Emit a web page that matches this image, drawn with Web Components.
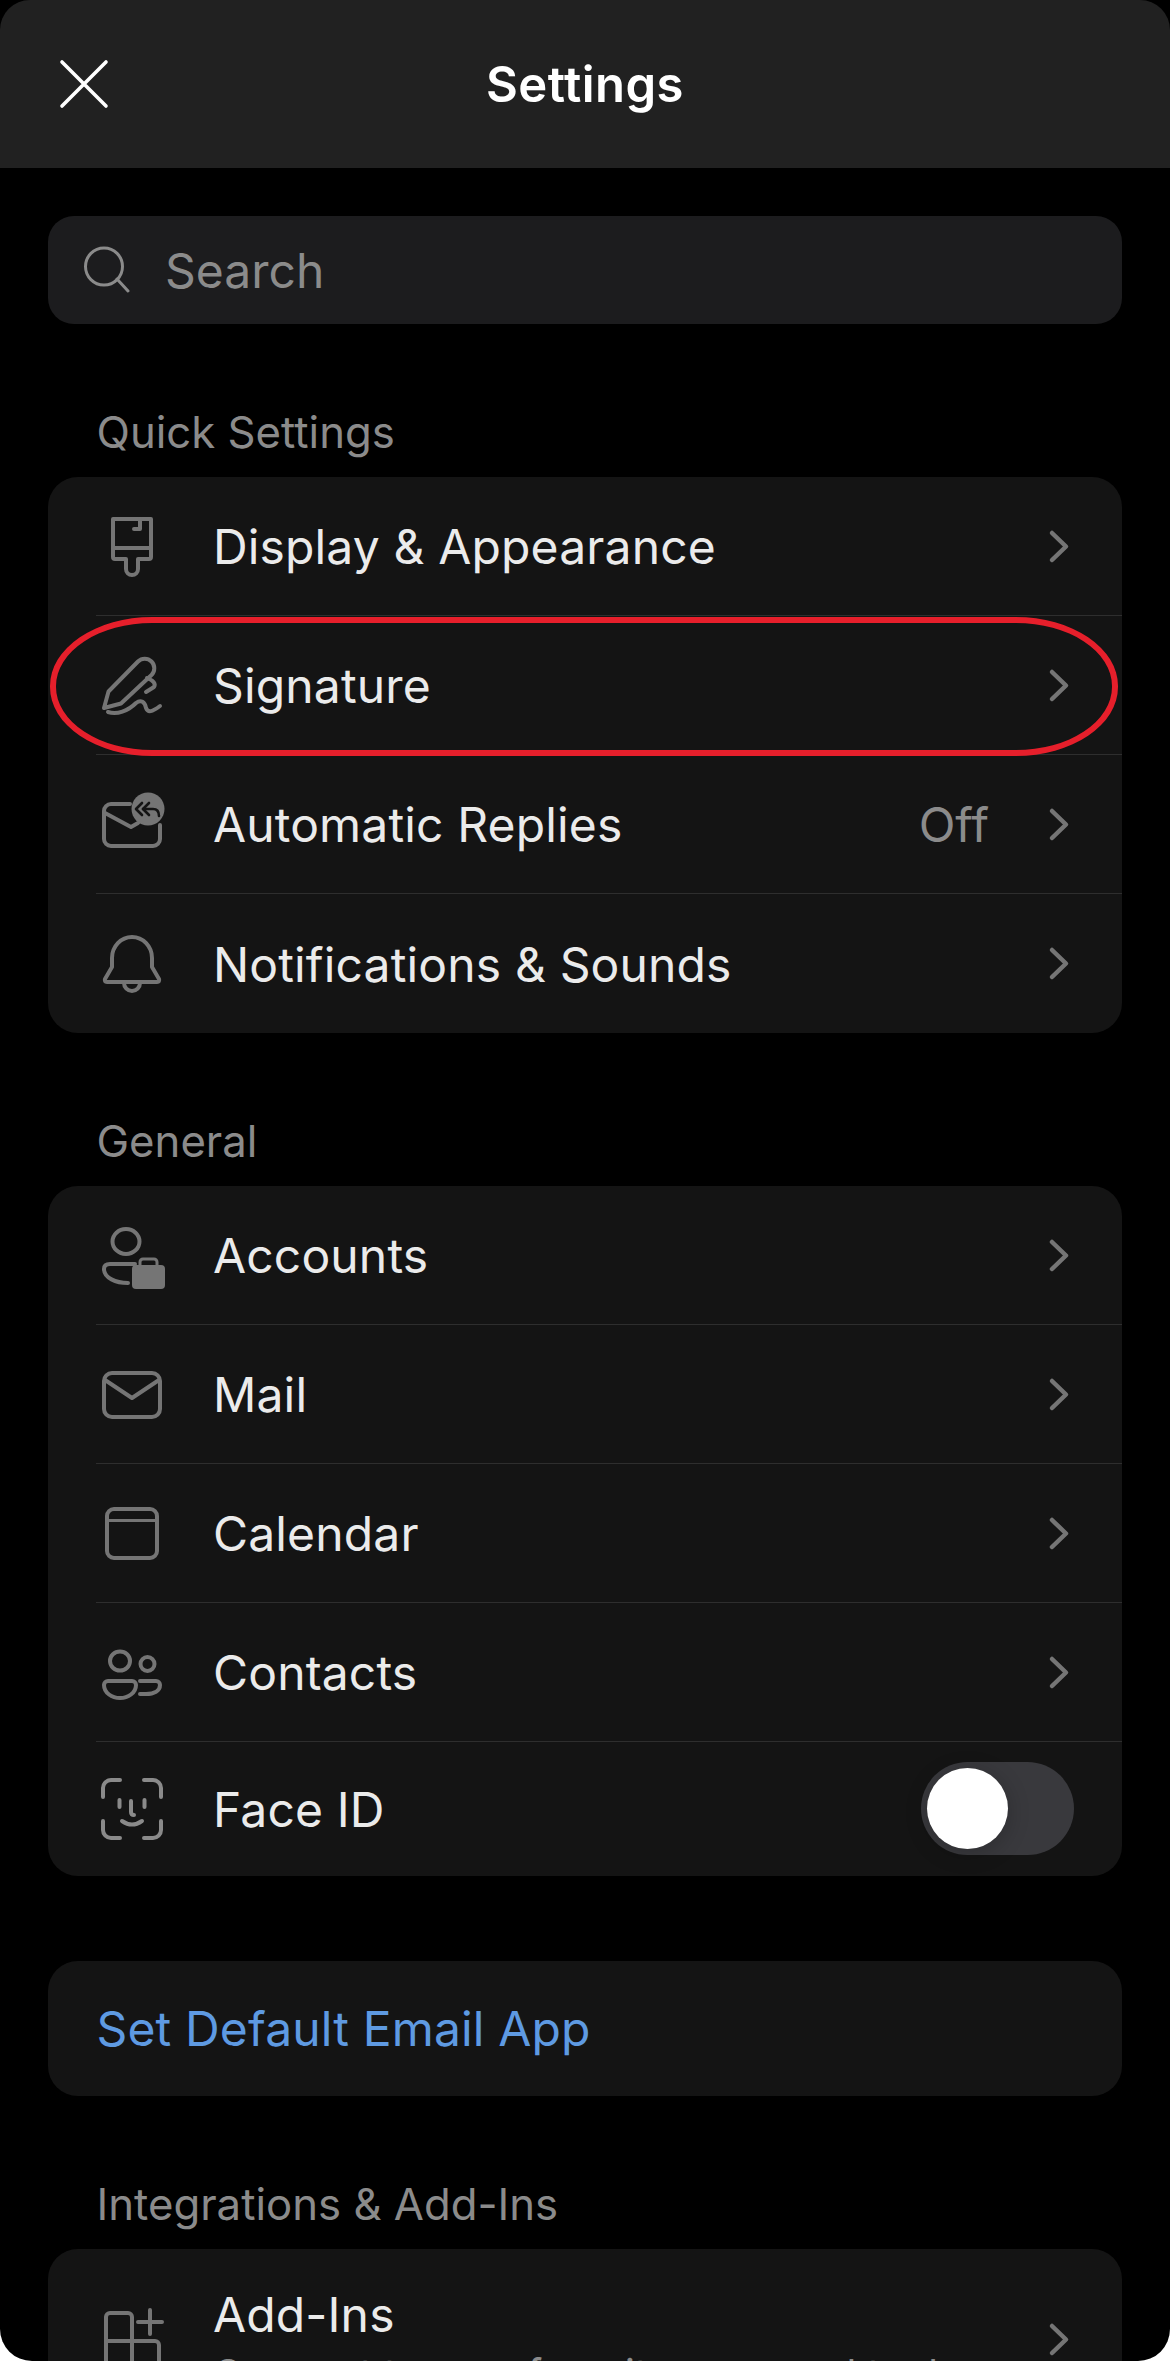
<!DOCTYPE html>
<html lang="en">
<head>
<meta charset="utf-8">
<title>Settings</title>
<style>
  html, body { margin: 0; padding: 0; background: #fff; }
  body { width: 1170px; height: 2361px; overflow: hidden; font-family: Inter, "Liberation Sans", sans-serif; }
</style>
</head>
<body>
<settings-screen>
  <settings-header slot="header" title="Settings"></settings-header>
  <search-box placeholder="Search"></search-box>

  <settings-section label="Quick Settings">
    <settings-row icon="brush" label="Display &amp; Appearance"></settings-row>
    <settings-row icon="signature" label="Signature"><highlight-ring slot="overlay"></highlight-ring></settings-row>
    <settings-row icon="reply" label="Automatic Replies" value="Off"></settings-row>
    <settings-row icon="bell" label="Notifications &amp; Sounds"></settings-row>
  </settings-section>

  <settings-section label="General">
    <settings-row icon="accounts" label="Accounts"></settings-row>
    <settings-row icon="mail" label="Mail"></settings-row>
    <settings-row icon="calendar" label="Calendar"></settings-row>
    <settings-row icon="contacts" label="Contacts"></settings-row>
    <settings-row icon="faceid" label="Face ID" toggle height="134"></settings-row>
  </settings-section>

  <link-card label="Set Default Email App"></link-card>

  <settings-section label="Integrations &amp; Add-Ins">
    <settings-row icon="addins" label="Add-Ins" sub="Connect to your favorite apps and tools" height="180"></settings-row>
  </settings-section>
</settings-screen>

<script>
// Icon drawings, all on a 66x66 box with the row's centre line at y=33
const ICONS = {
  brush: `<path d="M14 6H52V44a2 2 0 0 1-2 2H39V56a6 6 0 0 1-12 0V46H16a2 2 0 0 1-2-2Z"/><path d="M14 35H52"/><path d="M35 16H41V6"/>`,
  signature: `<path d="M5 56L9.5 39.5L39 9.5A9.5 9.5 0 0 1 52.5 23L22 51.5Z" stroke-linejoin="round"/><path d="M48 26Q58 30 55 35L47 40"/><path d="M9 60C18 63 29 59 37 51C42 47 46 50 47 56C49 61 53 60 61 54"/>`,
  reply: `<path d="M31 13H12a7 7 0 0 0-7 7V48a7 7 0 0 0 7 7H54a7 7 0 0 0 7-7V34"/><path d="M6 22L32 36L39 32"/>
    <circle cx="49" cy="18" r="16.5" fill="#757575" stroke="none"/>
    <g stroke="#141414" stroke-width="2.6"><path d="M43 12L37 18L43 24"/><path d="M50 12L44 18L50 24"/><path d="M44 18H54Q60 18 60 25"/></g>`,
  bell: `<path d="M13 27A20 21 0 0 1 53 27V36L60 48Q61 51 58 51H8Q5 51 6 48L13 36Z"/><path d="M25 52a8 8 0 0 0 16 0"/>`,
  accounts: `<ellipse cx="27" cy="19.5" rx="13.5" ry="12.5"/><path d="M36 42H11Q5 42 5 47C5 56 17 61 29 61"/>
    <rect x="33" y="43" width="33" height="24" rx="4" fill="#757575" stroke="none"/><path d="M41 44V40a3 3 0 0 1 3-3H55a3 3 0 0 1 3 3V44" stroke-width="3"/>`,
  mail: `<rect x="5" y="12" width="56" height="44" rx="8"/><path d="M6 19L33 37L60 19"/>`,
  calendar: `<rect x="8" y="9" width="50" height="49" rx="7"/><path d="M8 20.5H58" stroke-width="3"/>`,
  contacts: `<ellipse cx="21" cy="22" rx="10" ry="9.5"/><path d="M9 42H33a4 4 0 0 1 4 4C37 54 29 59 21 59S5 54 5 46a4 4 0 0 1 4-4Z"/>
    <circle cx="48.5" cy="25" r="7"/><path d="M41 42H57a4 4 0 0 1 4 4C61 52 55 55 47 55H41"/>`,
  faceid: `<g stroke="#8a8a8a"><path d="M4 21V12a8 8 0 0 1 8-8H21"/><path d="M45 4H54a8 8 0 0 1 8 8V21"/><path d="M4 45V54a8 8 0 0 0 8 8H21"/><path d="M62 45V54a8 8 0 0 1-8 8H45"/>
    <path d="M20.5 24V31"/><path d="M45.5 24V31"/><path d="M32 25V36q0 3 3 3"/><path d="M23 45Q33 52 43 45"/></g>`,
  addins: `<path d="M7 35V11a4 4 0 0 1 4-4H29a4 4 0 0 1 4 4V35"/><path d="M7 35H56a4 4 0 0 1 4 4V70"/><path d="M7 35V70M33 35V70"/><path d="M39 16H63M51 4V28"/>`
};

class SettingsScreen extends HTMLElement {
  constructor() {
    super();
    this.attachShadow({ mode: 'open' }).innerHTML = `
      <style>
        :host { display: block; width: 1170px; height: 2361px; overflow: hidden; background: #000; border-radius: 0 0 32px 32px; }
        main { padding: 48px 48px 0; display: flex; flex-direction: column; }
      </style>
      <slot name="header"></slot>
      <main><slot></slot></main>
    `;
  }
}

class SettingsHeader extends HTMLElement {
  constructor() {
    super();
    this.attachShadow({ mode: 'open' }).innerHTML = `
      <style>
        :host { display: grid; grid-template-columns: 1fr auto 1fr; align-items: center; height: 168px; padding: 0 58px; background: #212121; border-radius: 30px 30px 0 0; }
        svg { display: block; width: 52px; height: 52px; }
        h1 { margin: 0; font: 600 49px/1 Inter, sans-serif; letter-spacing: 0.45px; color: #fff; }
      </style>
      <svg viewBox="0 0 52 52" fill="none" stroke="#fff" stroke-width="3.6" stroke-linecap="round"><path d="M4 4L48 48M48 4L4 48"/></svg>
      <h1>${this.getAttribute('title')}</h1>
    `;
    this.removeAttribute('title');
  }
}

class SearchBox extends HTMLElement {
  constructor() {
    super();
    this.attachShadow({ mode: 'open' }).innerHTML = `
      <style>
        :host { display: flex; align-items: center; gap: 35px; height: 108px; padding-left: 34px; background: #1c1c1e; border-radius: 26px; }
        svg { display: block; width: 48px; height: 48px; }
        span { padding-top: 2px; font: 400 48px/1 Inter, sans-serif; color: #8b8b8b; }
      </style>
      <svg viewBox="0 0 48 48" fill="none" stroke="#8b8b8b" stroke-width="3" stroke-linecap="round"><circle cx="22" cy="20.500" r="18.500"/><path d="M35 33L46 45"/></svg>
      <span>${this.getAttribute('placeholder')}</span>
    `;
  }
}

class SettingsSection extends HTMLElement {
  constructor() {
    super();
    this.attachShadow({ mode: 'open' }).innerHTML = `
      <style>
        :host { display: block; }
        h2 { display: flex; align-items: flex-end; box-sizing: border-box; height: 153px; margin: 0; padding: 0 0 22px 48.500px; font: 400 43.700px/44px Inter, sans-serif; color: #8b8b8b; }
        .card { background: #141414; border-radius: 30px; overflow: hidden; }
      </style>
      <h2>${this.getAttribute('label').replace('&', '&amp;')}</h2>
      <div class="card"><slot></slot></div>
    `;
  }
}

class SettingsRow extends HTMLElement {
  constructor() {
    super();
    const root = this.attachShadow({ mode: 'open' });
    const label = this.getAttribute('label').replace('&', '&amp;');
    const sub = this.getAttribute('sub');
    const value = this.getAttribute('value');
    const height = this.getAttribute('height') || 139;
    root.innerHTML = `
      <style>
        :host { display: flex; flex-direction: column; position: relative; box-sizing: border-box; height: ${height}px; }
        :host(:last-child) .sep { display: none; }
        .body { flex: 1; min-height: 0; display: flex; align-items: center; padding: 0 54px 0 51px; }
        .icon { flex: none; display: block; width: 66px; height: 66px; overflow: visible; fill: none; stroke: #757575; stroke-width: 4; stroke-linecap: round; stroke-linejoin: round; margin-right: 48px; }
        .text { flex: 1; min-width: 0; padding-top: 2px; }
        .text.two { padding-top: 6px; }
        .label { font: 400 48px/56px Inter, sans-serif; letter-spacing: 0.15px; color: #ebebeb; white-space: nowrap; }
        .sub { font: 400 40px/48px Inter, sans-serif; color: #8b8b8b; white-space: nowrap; margin-top: 7px; }
        .value { padding-top: 2px; font: 400 48px/56px Inter, sans-serif; color: #8b8b8b; margin-right: 61px; }
        .chevron { flex: none; display: block; width: 18px; height: 31px; overflow: visible; fill: none; stroke: #757575; stroke-width: 4.5; stroke-linecap: round; stroke-linejoin: round; }
        .sep { flex: none; height: 1px; margin-left: 48px; background: #2e2e2e; }
        toggle-switch { margin: -1px -6px 0 0; }
      </style>
      <div class="body">
        <svg class="icon" viewBox="0 0 66 66">${ICONS[this.getAttribute('icon')]}</svg>
        <div class="text ${sub ? 'two' : ''}">
          <div class="label">${label}</div>
          ${sub ? `<div class="sub">${sub}</div>` : ''}
        </div>
        ${value ? `<span class="value">${value}</span>` : ''}
        ${this.hasAttribute('toggle')
          ? '<toggle-switch></toggle-switch>'
          : '<svg class="chevron" viewBox="0 0 18 31"><path d="M2 2L16 15.500L2 29"/></svg>'}
      </div>
      <div class="sep"></div>
      <slot name="overlay"></slot>
    `;
  }
}

class ToggleSwitch extends HTMLElement {
  constructor() {
    super();
    this.attachShadow({ mode: 'open' }).innerHTML = `
      <style>
        :host { display: block; flex: none; box-sizing: border-box; width: 153px; height: 93px; padding: 6px; background: #39393d; border-radius: 47px; }
        i { display: block; width: 81px; height: 81px; border-radius: 50%; background: #fff; box-shadow: 0 4px 22px rgba(0, 0, 0, 0.22); }
      </style>
      <i></i>
    `;
  }
}

class LinkCard extends HTMLElement {
  constructor() {
    super();
    this.attachShadow({ mode: 'open' }).innerHTML = `
      <style>
        :host { display: flex; align-items: center; height: 135px; margin-top: 85px; padding-left: 48.500px; background: #141414; border-radius: 30px; }
        span { font: 400 48px/1 Inter, sans-serif; letter-spacing: 0.15px; color: #5e9ae2; }
      </style>
      <span>${this.getAttribute('label')}</span>
    `;
  }
}

// Red marker drawn over the row it sits in
class HighlightRing extends HTMLElement {
  constructor() {
    super();
    this.attachShadow({ mode: 'open' }).innerHTML = `
      <style>
        :host { position: absolute; left: 2px; right: 4px; top: 1px; height: 139px; box-sizing: border-box; border: 6px solid #e61f2b; border-radius: 102px / 69px; pointer-events: none; }
      </style>
    `;
  }
}

customElements.define('settings-screen', SettingsScreen);
customElements.define('settings-header', SettingsHeader);
customElements.define('search-box', SearchBox);
customElements.define('settings-section', SettingsSection);
customElements.define('settings-row', SettingsRow);
customElements.define('toggle-switch', ToggleSwitch);
customElements.define('link-card', LinkCard);
customElements.define('highlight-ring', HighlightRing);
</script>
</body>
</html>
